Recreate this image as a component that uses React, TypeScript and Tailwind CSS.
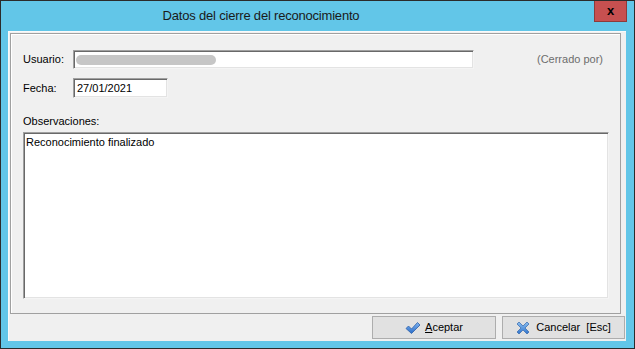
import React from 'react'

function CheckIcon() {
  return (
    <svg width="16" height="14" viewBox="0 0 16 14">
      <defs>
        <linearGradient id="chk" x1="0" y1="0" x2="0" y2="1">
          <stop offset="0" stopColor="#7fb4f0" />
          <stop offset="1" stopColor="#2a6cc8" />
        </linearGradient>
      </defs>
      <path
        d="M1 7.5 L3.5 5 L6.5 8 L12.5 1.5 L15 4 L6.5 12.5 Z"
        fill="url(#chk)"
        stroke="#2d5fa8"
        strokeWidth="0.8"
        strokeLinejoin="round"
      />
    </svg>
  )
}

function CrossIcon() {
  return (
    <svg width="14" height="14" viewBox="0 0 14 14">
      <defs>
        <linearGradient id="crs" x1="0" y1="0" x2="0" y2="1">
          <stop offset="0" stopColor="#8cc0f2" />
          <stop offset="1" stopColor="#2f74cc" />
        </linearGradient>
      </defs>
      <path
        d="M1 3 L3 1 L7 5 L11 1 L13 3 L9 7 L13 11 L11 13 L7 9 L3 13 L1 11 L5 7 Z"
        fill="url(#crs)"
        stroke="#3566aa"
        strokeWidth="0.7"
        strokeLinejoin="round"
      />
    </svg>
  )
}

const sunken =
  'bg-white border border-t-[#a0a0a0] border-l-[#a0a0a0] border-b-[#f4f4f4] border-r-[#f4f4f4] shadow-[inset_1px_1px_0_#696969,inset_-1px_-1px_0_#e3e3e3]'

export default function App() {
  return (
    <div
      className="w-[635px] h-[349px] bg-[#2b2b2b] p-px text-[11px] text-black"
      style={{ fontFamily: '"Liberation Sans", Arial, sans-serif' }}
    >
      <div className="h-full flex flex-col bg-[#62c6e8]">
        {/* Title bar */}
        <div className="h-[30px] flex items-start">
          <div className="flex-1 h-full flex items-center justify-center pl-[8px] pr-[81px] text-[13px] tracking-[-0.2px] text-[#1a1a1a]">
            Datos del cierre del reconocimiento
          </div>
          <div className="w-[33px] h-[21px] mr-[7px] bg-[#c75050] border border-[#8e3a3a] border-t-0 flex items-center justify-center">
            <span className="text-[13px] font-bold leading-none -mt-[2px]">x</span>
          </div>
        </div>

        {/* Client area */}
        <div className="ml-[7px] w-[618px] h-[310px] bg-[#f0f0f0] border-t border-l border-[#fafafa] flex flex-col pl-[1px] pt-[1px]">
          <div className="w-[611px] h-[281px] border border-[#a0a0a0] shadow-[inset_1px_1px_0_#ffffff] flex flex-col pl-[12px]">
            {/* Usuario */}
            <div className="flex items-center h-[19px] mt-[16px]">
              <span className="w-[50px]">Usuario:</span>
              <div className={`w-[401px] h-[19px] ${sunken} flex items-center pl-[2px]`}>
                <div className="w-[140px] h-[10px] rounded-full bg-[#c6c6c6]" />
              </div>
              <span className="ml-auto mr-[17px] text-[#6d6d6d]">(Cerrado por)</span>
            </div>

            {/* Fecha */}
            <div className="flex items-center h-[20px] mt-[9px]">
              <span className="w-[50px]">Fecha:</span>
              <div className={`w-[95px] h-[20px] ${sunken} flex items-center pl-[3px]`}>
                27/01/2021
              </div>
            </div>

            {/* Observaciones */}
            <div className="mt-[17px] h-[13px] leading-[13px]">Observaciones:</div>
            <div className={`mt-[4px] w-[586px] h-[167px] ${sunken} px-[2px] pt-[2px] leading-[14px]`}>
              Reconocimiento finalizado
            </div>
          </div>

          {/* Buttons */}
          <div className="flex justify-end gap-[6px] mt-[2px] pr-[1px]">
            <button className="w-[124px] h-[23px] bg-[#e1e1e1] border border-[#adadad] flex items-center justify-center gap-[4px]">
              <CheckIcon />
              <span>
                <span className="underline">A</span>ceptar
              </span>
            </button>
            <button className="w-[123px] h-[23px] bg-[#e1e1e1] border border-[#adadad] flex items-center justify-center gap-[6px]">
              <CrossIcon />
              <span>Cancelar&nbsp; [Esc]</span>
            </button>
          </div>
        </div>
      </div>
    </div>
  )
}
